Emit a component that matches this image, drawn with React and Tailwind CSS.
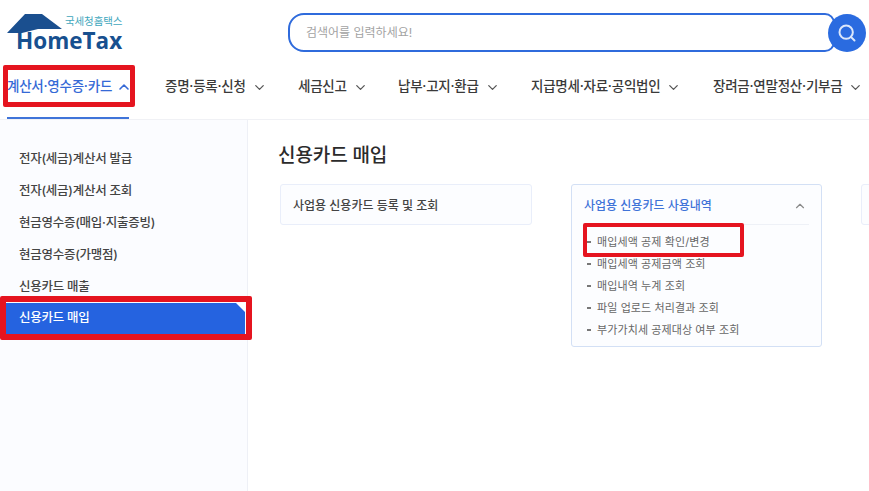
import { ChevronDown, ChevronUp, Search } from "lucide-react";

const FONT = "font-['Inter','Noto_Sans_CJK_KR',sans-serif]";

const navItems = [
  { label: "증명·등록·신청", width: "w-[133px]" },
  { label: "세금신고", width: "w-[100px]" },
  { label: "납부·고지·환급", width: "w-[133px]" },
  { label: "지급명세·자료·공익법인", width: "w-[182px]" },
  { label: "장려금·연말정산·기부금", width: "w-[156px]" },
];

const sideItems = [
  "전자(세금)계산서 발급",
  "전자(세금)계산서 조회",
  "현금영수증(매입·지출증빙)",
  "현금영수증(가맹점)",
  "신용카드 매출",
];

const subItems = [
  "매입세액 공제금액 조회",
  "매입내역 누계 조회",
  "파일 업로드 처리결과 조회",
  "부가가치세 공제대상 여부 조회",
];

function Logo() {
  return (
    <div className="relative w-[125px] h-[52px] shrink-0">
      <svg className="absolute left-0 top-0" width="70" height="40" viewBox="0 0 70 40">
        <path d="M7 33 L25 14 H42 L62 29 H38 L22 33 Z" fill="#1a4f8f" />
      </svg>
      <span className="absolute left-[65px] top-[15px] text-[10.5px] leading-[14px] tracking-[-0.1px] text-[#3fa7bd] whitespace-nowrap">
        국세청홈택스
      </span>
      <span className="absolute left-[16px] top-[30px] text-[22.5px] leading-[22px] font-bold text-[#17508f] font-['Open_Sans',sans-serif] whitespace-nowrap">
        HomeTax
      </span>
    </div>
  );
}

export default function App() {
  return (
    <div className={`${FONT} w-[869px] h-[491px] overflow-hidden bg-white flex flex-col text-[#333]`}>
      {/* Header */}
      <header className="h-[120px] shrink-0 border-b border-[#f0f1f5] flex flex-col">
        <div className="h-[65px] flex items-start">
          <Logo />
          <div className="ml-[163px] mt-[13px] flex items-center">
            <div className="w-[547px] h-[39px] border-2 border-[#2f6bdc] rounded-l-[16px] rounded-r-[10px] flex items-center pl-[16px] text-[12px] text-[#a3a3a3]">
              검색어를 입력하세요!
            </div>
            <button className="-ml-[7px] w-[38px] h-[38px] rounded-full bg-[#2a6be0] flex items-center justify-center relative">
              <Search size={20} strokeWidth={2.4} className="text-[#dbe7fb]" />
            </button>
          </div>
        </div>

        {/* Nav */}
        <nav className="relative flex-1 flex items-start text-[13.5px] font-medium whitespace-nowrap">
          <div className="relative w-[165px] shrink-0 h-[54px] pl-[7px] pt-[11px] flex items-start text-[#3569d6]">
            <span className="tracking-[-0.25px]">계산서·영수증·카드</span>
            <ChevronUp size={16} strokeWidth={2.4} className="ml-[4px] mt-[3px]" />
            <div className="absolute left-[3px] top-0 w-[132px] h-[42px] border-[5px] border-[#e5141f] rounded-[2px]" />
            <div className="absolute left-[7px] top-[52px] w-[122px] h-[2px] bg-[#3f74d9]" />
          </div>
          {navItems.map((item) => (
            <div key={item.label} className={`${item.width} shrink-0 pt-[11px] flex items-start text-[#3a3a3a]`}>
              <span className="tracking-[-0.25px]">{item.label}</span>
              <ChevronDown size={15} strokeWidth={2} className="ml-[6px] mt-[4px] text-[#555]" />
            </div>
          ))}
        </nav>
      </header>

      <div className="flex flex-1 min-h-0">
        {/* Sidebar */}
        <aside className="w-[248px] shrink-0 bg-[#fbfcff] border-r border-[#eef0f6] pt-[23px] pl-[5px] text-[12.5px] font-medium text-[#444]">
          {sideItems.map((item) => (
            <div key={item} className="h-[32px] flex items-center pl-[14px] tracking-[-0.25px]">
              {item}
            </div>
          ))}
          <div className="relative w-[240px] h-[31px] bg-[#2563e0] border-l border-[#dfe8fa] flex items-center pl-[13px] text-white tracking-[-0.25px]">
            신용카드 매입
            <div className="absolute right-0 top-0 w-0 h-0 border-l-[9px] border-l-transparent border-t-[9px] border-t-white" />
            <div className="absolute -left-[6px] -top-[7px] w-[252px] h-[44px] border-[6px] border-[#e5141f] rounded-[2px]" />
          </div>
        </aside>

        {/* Content */}
        <main className="flex-1 min-w-0 pl-[32px] pt-[23px] overflow-hidden">
          <h2 className="-ml-[2px] text-[19px] leading-[26px] font-medium text-[#2b2b2b] tracking-[-0.1px]">신용카드 매입</h2>
          <div className="mt-[15px] flex items-start gap-[39px]">
            <div className="w-[252px] h-[41px] shrink-0 rounded-[3px] border border-[#e9eefa] bg-[#fcfdff] flex items-center pl-[12px] pt-[2px] text-[12px] font-medium text-[#444]">
              사업용 신용카드 등록 및 조회
            </div>

            <div className="w-[251px] h-[163px] shrink-0 rounded-[3px] border border-[#d3e0f5] bg-[#fcfdff] px-[12px]">
              <div className="h-[40px] pt-[2px] border-b border-[#eef1f7] flex items-center justify-between">
                <span className="text-[12px] font-medium text-[#3f73d8]">사업용 신용카드 사용내역</span>
                <ChevronUp size={14} strokeWidth={2} className="text-[#8a8a8a] mr-[2px]" />
              </div>
              <ul className="text-[11px] text-[#666] tracking-[0.1px]">
                <li className="relative h-[21px] mt-[7px] flex items-center pl-[13px]">
                  <span className="absolute left-[3px] top-[9px] w-[4px] h-[1.5px] bg-[#777]" />
                  매입세액 공제 확인/변경
                  <div className="absolute -left-[1px] -top-[9px] w-[161px] h-[34px] border-[4px] border-[#e5141f] rounded-[2px]" />
                </li>
                {subItems.map((item) => (
                  <li key={item} className="relative h-[22px] flex items-center pl-[13px]">
                    <span className="absolute left-[3px] top-[10px] w-[4px] h-[1.5px] bg-[#777]" />
                    {item}
                  </li>
                ))}
              </ul>
            </div>

            <div className="w-[100px] h-[41px] shrink-0 rounded-[3px] border border-[#e9eefa] bg-[#fcfdff]" />
          </div>
        </main>
      </div>
    </div>
  );
}
